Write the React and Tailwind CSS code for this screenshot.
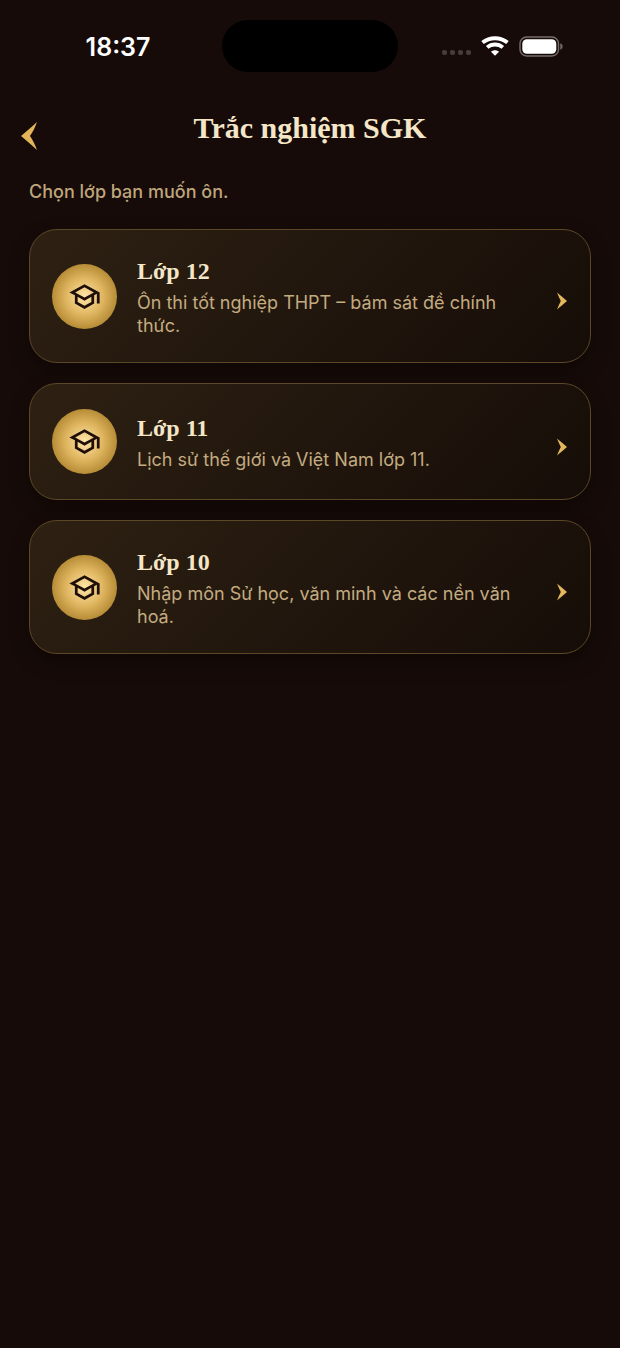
import { MdOutlineSchool } from "react-icons/md";

const grades = [
  {
    id: 12,
    title: "Lớp 12",
    description: "Ôn thi tốt nghiệp THPT – bám sát đề chính thức.",
  },
  {
    id: 11,
    title: "Lớp 11",
    description: "Lịch sử thế giới và Việt Nam lớp 11.",
  },
  {
    id: 10,
    title: "Lớp 10",
    description: "Nhập môn Sử học, văn minh và các nền văn hoá.",
  },
];

function StatusBar() {
  return (
    <div className="grid grid-cols-[1fr_176px_1fr] items-center pt-5">
      <span className="pt-1 pl-3.5 text-center font-['Inter',sans-serif] text-[25px] font-semibold text-white">
        18:37
      </span>
      <div className="h-[52px] rounded-full bg-black" />
      <div className="flex items-center justify-end gap-2.5 pr-14">
        <div className="flex gap-[3px] pt-3">
          {[0, 1, 2, 3].map((i) => (
            <span key={i} className="size-[5px] rounded-[2px] bg-[#463d3b]" />
          ))}
        </div>
        <svg width="28" height="20" viewBox="0 0 28 20" fill="none" aria-hidden="true">
          <path d="M1.500 6.500C8.800 .8 19.200 .8 26.500 6.500" stroke="#fff" strokeWidth="4" />
          <path d="M6.200 11.400c4.500-3.900 11.100-3.900 15.600 0" stroke="#fff" strokeWidth="3.8" />
          <path d="M10 15.700c2.300-2 5.700-2 8 0L14 19.700z" fill="#fff" />
        </svg>
        <svg width="45" height="21" viewBox="0 0 45 21" aria-hidden="true">
          <rect x="1" y="1" width="38.5" height="19" rx="6.5" fill="none" stroke="#756d6b" strokeWidth="1.4" />
          <rect x="3.3" y="3.3" width="34" height="14.4" rx="4.5" fill="#fff" />
          <path d="M41.3 7.200c3 1 3 5.600 0 6.600z" fill="#756d6b" />
        </svg>
      </div>
    </div>
  );
}

function GradeCard({ title, description }) {
  return (
    <button
      type="button"
      className="flex w-full items-center gap-5 rounded-[28px] border border-[#5c4726] bg-linear-135 from-[#2e2113] to-[#160d08] px-[22px] py-[25px] text-left shadow-[0_8px_20px_rgba(0,0,0,0.3)]"
    >
      <span className="flex size-[65px] shrink-0 items-center justify-center rounded-full bg-[radial-gradient(circle,#ffe6a8_0%,#deb35d_42%,#b58a35_72%)] text-[#1f0f08]">
        <MdOutlineSchool size={33} />
      </span>
      <span className="flex min-w-0 flex-1 flex-col gap-1 pr-6">
        <span className="font-['Liberation_Serif',serif] text-[24px] leading-8 font-bold text-[#f5e6c8]">
          {title}
        </span>
        <span className="font-['Inter',sans-serif] text-[18px] leading-[23px] text-[#c3ab80]">
          {description}
        </span>
      </span>
      <svg className="mt-2.5 shrink-0" width="11" height="18" viewBox="0 0 11 18" aria-hidden="true">
        <path d="M0 .5C3 2.800 6.500 6 10 9 6.500 12 3 15.200 0 17.500 1.300 14.500 2.500 11.500 3.800 9 2.500 6.500 1.300 3.500 0 .5z" fill="#e3b85c" />
      </svg>
    </button>
  );
}

export default function App() {
  return (
    <div className="min-h-screen bg-[#160b08]">
      <StatusBar />
      <header className="grid grid-cols-[60px_1fr_60px] items-center pt-8">
        <button type="button" aria-label="Quay lại" className="flex pt-4 pl-[21px]">
          <svg width="16" height="28" viewBox="0 0 16 28" aria-hidden="true">
            <path d="M16 0C11 4.500 5.500 9.500 0 14c5.500 4.500 11 9.500 16 14-1.800-5-4.100-10-7-14C11.900 10 14.200 5 16 0z" fill="#e3b45a" />
          </svg>
        </button>
        <h1 className="text-center font-['Liberation_Serif',serif] text-[30px] leading-[48px] font-bold text-[#f5e6c8]">
          Trắc nghiệm SGK
        </h1>
      </header>
      <main className="px-[29px] pt-7">
        <p className="font-['Inter',sans-serif] text-[18px] leading-6 font-medium text-[#bfa67c]">
          Chọn lớp bạn muốn ôn.
        </p>
        <div className="mt-[25px] flex flex-col gap-5">
          {grades.map((grade) => (
            <GradeCard key={grade.id} title={grade.title} description={grade.description} />
          ))}
        </div>
      </main>
    </div>
  );
}
